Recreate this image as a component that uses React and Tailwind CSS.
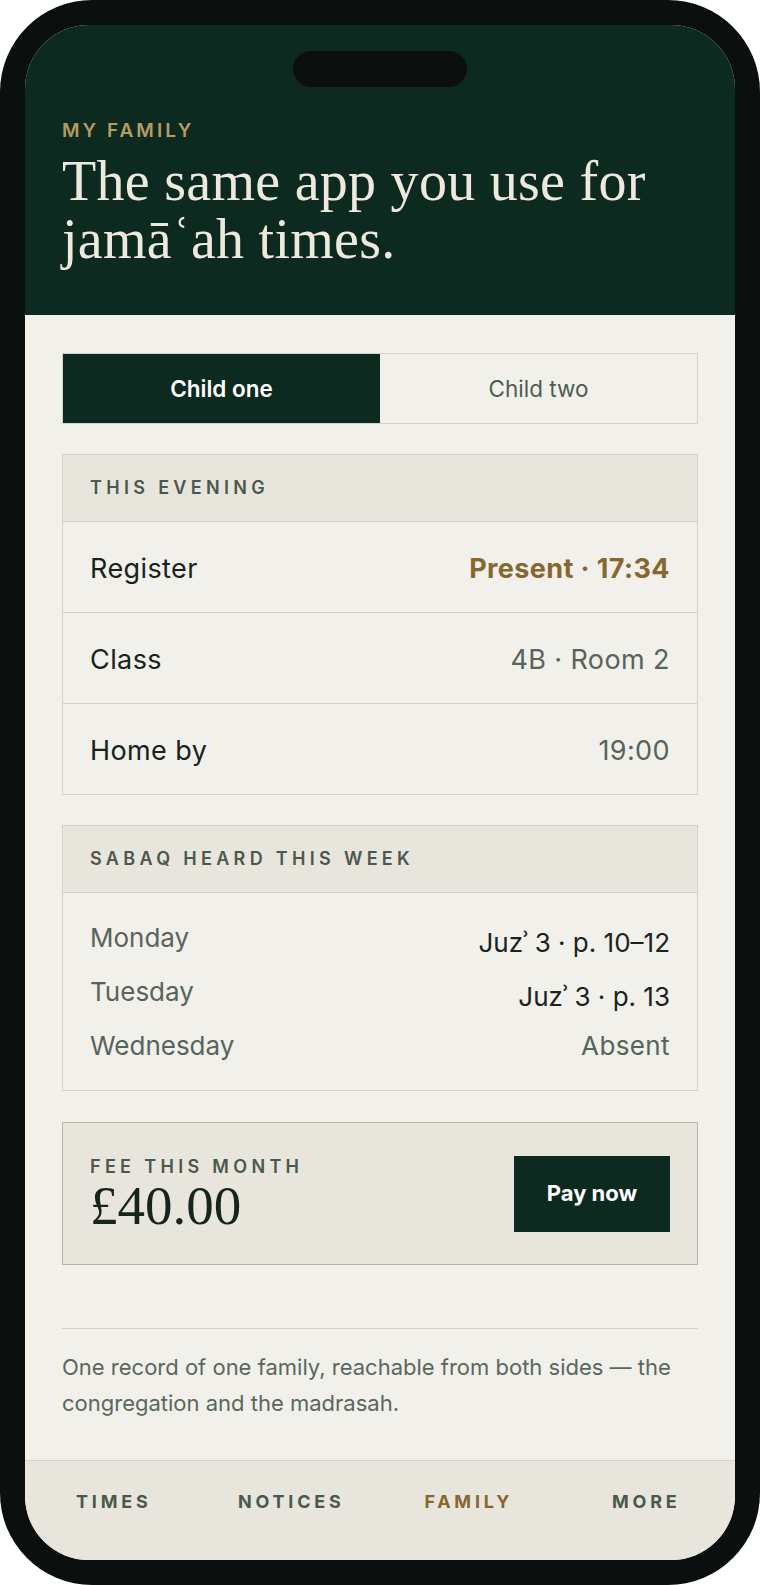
import React from "react";

const rowsEvening = [
  { label: "Register", value: "Present · 17:34", kind: "gold" },
  { label: "Class", value: "4B · Room 2", kind: "muted" },
  { label: "Home by", value: "19:00", kind: "muted" },
];

const sabaq = [
  { day: "Monday", value: "Juzʾ 3 · p. 10–12", dark: true },
  { day: "Tuesday", value: "Juzʾ 3 · p. 13", dark: true },
  { day: "Wednesday", value: "Absent", dark: false },
];

function CardHeader({ children }) {
  return (
    <div className="h-[67px] border-b border-[#d4d1c6] bg-[#e8e6dc] flex items-center px-[27px]">
      <span className="text-[18px] leading-[24px] font-semibold tracking-[0.24em] text-[#4b584f]">
        {children}
      </span>
    </div>
  );
}

export default function App() {
  return (
    <div className="w-[760px] h-[1585px] bg-white font-['Inter',sans-serif]">
      <div className="w-full h-full rounded-[92px] bg-[#0b100e] p-[25px] pb-[25px]">
        <div className="w-full h-full rounded-[64px] overflow-hidden bg-[#f1f0ea] flex flex-col">
          {/* Header */}
          <div className="h-[290px] shrink-0 bg-[#0d2a20] px-[37px] pt-[26px] flex flex-col">
            <div className="self-center w-[174px] h-[36px] rounded-full bg-[#0b100e]" />
            <div className="mt-[32px] text-[19px] leading-[24px] font-semibold tracking-[0.16em] text-[#b89c5f]">
              MY FAMILY
            </div>
            <h1 className="mt-[9px] font-['Liberation_Serif',serif] text-[56px] leading-[58px] text-[#eee9dd] font-normal tracking-[0.005em]">
              The same app you use for jamāʿah times.
            </h1>
          </div>

          {/* Main */}
          <div className="flex-1 px-[37px] pt-[38px] flex flex-col">
            {/* Tabs */}
            <div className="h-[71px] border border-[#d4d1c6] grid grid-cols-2">
              <div className="bg-[#0d2a20] flex items-center justify-center text-[22.5px] font-semibold text-white">
                Child one
              </div>
              <div className="flex items-center justify-center text-[22.5px] text-[#4f5c53]">
                Child two
              </div>
            </div>

            {/* This evening */}
            <div className="mt-[30px] border border-[#d4d1c6]">
              <CardHeader>THIS EVENING</CardHeader>
              {rowsEvening.map((r, i) => (
                <div
                  key={r.label}
                  className={
                    "px-[27px] pt-[4px] flex items-center justify-between text-[27px] tracking-[0.015em] " +
                    (i < rowsEvening.length - 1 ? "h-[91px] border-b border-[#d4d1c6]" : "h-[90px]")
                  }
                >
                  <span className="text-[#17231d]">{r.label}</span>
                  <span
                    className={
                      r.kind === "gold"
                        ? "font-bold text-[#876730]"
                        : "text-[#56645b]"
                    }
                  >
                    {r.value}
                  </span>
                </div>
              ))}
            </div>

            {/* Sabaq */}
            <div className="mt-[30px] border border-[#d4d1c6]">
              <CardHeader>SABAQ HEARD THIS WEEK</CardHeader>
              <div className="px-[27px] pt-[27px] pb-[26px] flex flex-col gap-[18px]">
                {sabaq.map((s) => (
                  <div key={s.day} className="h-[36px] flex items-center justify-between text-[26px] leading-[36px]">
                    <span className="text-[#56645b]">{s.day}</span>
                    <span
                      className={
                        s.dark
                          ? "text-[#17231d] translate-y-[5px]"
                          : "text-[#56645b] tracking-[0.015em]"
                      }
                    >
                      {s.value}
                    </span>
                  </div>
                ))}
              </div>
            </div>

            {/* Fee */}
            <div className="mt-[31px] h-[143px] border border-[#b8b3a2] bg-[#e8e6dc] px-[27px] flex items-center justify-between">
              <div className="flex flex-col">
                <span className="text-[18px] leading-[24px] font-semibold tracking-[0.24em] text-[#4b584f]">
                  FEE THIS MONTH
                </span>
                <span className="font-['Liberation_Serif',serif] text-[55px] leading-[54px] text-[#17231d]">
                  £40.00
                </span>
              </div>
              <button className="w-[156px] h-[76px] bg-[#0d2a20] text-white text-[22px] font-bold">
                Pay now
              </button>
            </div>

            {/* Divider + note */}
            <div className="mt-[63px] border-t border-[#d4d1c6]" />
            <p className="mt-[20px] text-[22px] leading-[36px] text-[#5a675e]">
              One record of one family, reachable from both sides — the congregation and the madrasah.
            </p>
          </div>

          {/* Bottom nav */}
          <div className="h-[100px] shrink-0 border-t border-[#d4d1c6] bg-[#e8e6dc] grid grid-cols-4 pt-[29px]">
            {["TIMES", "NOTICES", "FAMILY", "MORE"].map((t) => (
              <div
                key={t}
                className={
                  "text-center text-[18px] leading-[24px] font-bold tracking-[0.21em] h-[24px] " +
                  (t === "FAMILY" ? "text-[#876730]" : "text-[#4b584f]")
                }
              >
                {t}
              </div>
            ))}
          </div>
        </div>
      </div>
    </div>
  );
}
